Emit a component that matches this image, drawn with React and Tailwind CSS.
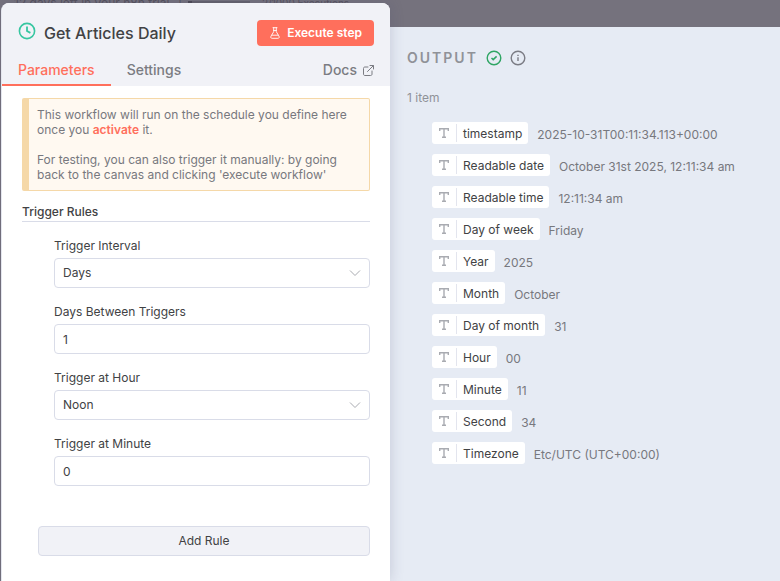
import { useState } from 'react';

const outputFields = [
  { name: 'timestamp', value: '2025-10-31T00:11:34.113+00:00' },
  { name: 'Readable date', value: 'October 31st 2025, 12:11:34 am' },
  { name: 'Readable time', value: '12:11:34 am' },
  { name: 'Day of week', value: 'Friday' },
  { name: 'Year', value: '2025' },
  { name: 'Month', value: 'October' },
  { name: 'Day of month', value: '31' },
  { name: 'Hour', value: '00' },
  { name: 'Minute', value: '11' },
  { name: 'Second', value: '34' },
  { name: 'Timezone', value: 'Etc/UTC (UTC+00:00)' },
];

function ClockIcon() {
  return (
    <svg className="mb-1 size-[18px] shrink-0" viewBox="0 0 18 18" fill="none" stroke="#36c6a0" strokeWidth="1.6">
      <circle cx="9" cy="9" r="7.6" />
      <path d="M9 4.6V9l3.4 1.9" strokeWidth="1.8" />
    </svg>
  );
}

function FlaskIcon() {
  return (
    <svg className="size-3 shrink-0" viewBox="0 0 12 12" fill="none" stroke="currentColor" strokeLinecap="round" strokeLinejoin="round">
      <path d="M4 .7h4M4.7.7v4L2.2 8.9c-.9 1.5-.3 2.4.9 2.4h5.8c1.2 0 1.8-.9.9-2.4L7.3 4.7v-4M4.7 3.5h2.6M3 8.2h6" strokeWidth=".9" />
    </svg>
  );
}

function ExternalIcon() {
  return (
    <svg className="size-[11px] shrink-0" viewBox="0 0 11 11" fill="none" stroke="currentColor" strokeLinecap="round" strokeLinejoin="round">
      <path d="M5 2H2C1 2 .5 2.5.5 3.5V9c0 1 .5 1.5 1.5 1.5h5.500c1 0 1.500-.5 1.500-1.500V6M7 .5h3.500V4M10.300.7L4.500 6.500" />
    </svg>
  );
}

function CheckIcon() {
  return (
    <svg className="size-4 shrink-0" viewBox="0 0 16 16" fill="none" stroke="#2fa564" strokeWidth="1.4">
      <circle cx="8" cy="8" r="6.8" />
      <path d="M5.5 8l1.7 1.6 3.4-3.2" strokeWidth="1.5" />
    </svg>
  );
}

function InfoIcon() {
  return (
    <svg className="size-4 shrink-0" viewBox="0 0 16 16" fill="none" stroke="#7b7c84" strokeWidth="1.4">
      <circle cx="8" cy="8" r="6.8" />
      <path d="M8 7.2v3.8M8 4.8v1.3" />
    </svg>
  );
}

function TextTypeIcon() {
  return (
    <svg className="size-3 shrink-0" viewBox="0 0 12 12" fill="none" stroke="#a9abb1" strokeWidth="1.4">
      <path d="M1.7 4V1.7h8.6V4M6 1.7v8.6M4 10.3h4" />
    </svg>
  );
}

const controlClass =
  'block h-[30px] w-full appearance-none rounded-[4px] border border-[#d9dce8] bg-white px-2 text-xs text-[#414244] outline-none focus:border-[#ff6d5a]';

function Field({ id, label, children }) {
  return (
    <div className="flex flex-col gap-[2px]">
      <label htmlFor={id} className="text-xs leading-5">{label}</label>
      {children}
    </div>
  );
}

function SelectField({ id, label, options }) {
  return (
    <Field id={id} label={label}>
      <div className="relative">
        <select id={id} className={controlClass}>
          {options.map((o) => (
            <option key={o}>{o}</option>
          ))}
        </select>
        <svg className="pointer-events-none absolute top-2 right-2 size-3.5" viewBox="0 0 14 14" fill="none" stroke="#a9abb1">
          <path d="M2 4.5l5 5 5-5" />
        </svg>
      </div>
    </Field>
  );
}

function NumberField({ id, label, initial }) {
  const [value, setValue] = useState(initial);

  return (
    <Field id={id} label={label}>
      <input id={id} type="text" value={value} onChange={(e) => setValue(e.target.value)} className={controlClass} />
    </Field>
  );
}

function ParametersPanel() {
  return (
    <section className="z-10 mt-[3px] ml-px flex flex-col overflow-hidden rounded-t-lg border-l border-[#e4e6ee] bg-white shadow-[0_0_14px_rgba(70,75,110,0.22)]">
      <header className="bg-[#f1f2f7]">
        <div className="flex h-[60px] items-center gap-2 px-4">
          <ClockIcon />
          <h1 className="flex-1 text-base leading-5 font-medium">Get Articles Daily</h1>
          <button type="button" className="flex h-[26px] items-center gap-[6px] rounded-[4px] bg-[#ff6f5c] px-3 text-xs font-semibold text-white">
            <FlaskIcon />
            Execute step
          </button>
        </div>
        <nav className="flex items-start text-sm leading-[14px] font-medium text-[#7b7c82]">
          <button type="button" className="border-b-2 border-[#ff6f5c] px-4 pb-[7px] text-[#ff6f5c]">Parameters</button>
          <button type="button" className="px-4">Settings</button>
          <a href="#docs" className="ml-auto flex items-center gap-[6px] pr-4">
            Docs
            <ExternalIcon />
          </a>
        </nav>
      </header>

      <div className="flex flex-col pt-3 pr-5 pb-6 pl-5">
        {/* Notice */}
        <div className="rounded-[2px] border border-l-[7px] border-[#f5d8a8] bg-[#fff9f1] p-2 text-xs leading-[15px] text-[#77787e]">
          <p>
            This workflow will run on the schedule you define here once you{' '}
            <a href="#activate" className="font-semibold text-[#ff6f5c]">activate</a> it.
          </p>
          <p className="mt-[15px]">
            For testing, you can also trigger it manually: by going back to the canvas and clicking 'execute workflow'
          </p>
        </div>

        {/* Rules */}
        <h2 className="mt-3 border-b border-[#d9dce8] text-xs leading-[18px] font-medium">Trigger Rules</h2>
        <div className="mt-[14px] flex flex-col gap-[14px] pl-8">
          <SelectField id="interval" label="Trigger Interval" options={['Days', 'Hours', 'Weeks', 'Months']} />
          <NumberField id="days" label="Days Between Triggers" initial="1" />
          <SelectField id="hour" label="Trigger at Hour" options={['Noon', 'Midnight']} />
          <NumberField id="minute" label="Trigger at Minute" initial="0" />
        </div>
        <button type="button" className="mt-10 ml-4 h-[30px] rounded-[4px] border border-[#d9dce8] bg-[#f1f2f7] text-xs">
          Add Rule
        </button>
      </div>
    </section>
  );
}

function OutputPanel() {
  return (
    <section className="mt-[27px] bg-[#e6ebf4] pt-[22px] pl-[17px]">
      <div className="flex h-[18px] items-center gap-2">
        <h2 className="text-sm font-semibold tracking-[2px] text-[#909298]">OUTPUT</h2>
        <CheckIcon />
        <InfoIcon />
      </div>
      <p className="mt-[22px] text-xs leading-[18px] text-[#909298]">1 item</p>

      <ul className="mt-[15px] flex flex-col gap-2 pl-[25px] text-xs">
        {outputFields.map((field) => (
          <li key={field.name} className="flex items-start gap-[9px]">
            <span className="flex h-[22px] items-center rounded-[3px] bg-white px-[6px]">
              <TextTypeIcon />
              <span className="ml-[6px] h-[18px] border-l border-[#e3e5ee] pl-[6px] leading-5">{field.name}</span>
            </span>
            <span className="pt-[2px] leading-[22px] text-[#77787e]">{field.value}</span>
          </li>
        ))}
      </ul>
    </section>
  );
}

function App() {
  return (
    <div className="relative grid min-h-screen grid-cols-2 bg-[#75727d] font-['Inter',sans-serif] text-[#414244]">
      {/* Dimmed top bar of the canvas, mostly hidden by the panel */}
      <div className="absolute inset-x-0 top-0 flex h-4 items-start leading-[6px] whitespace-nowrap text-[#55525d]">
        <span className="w-[164px] pl-[14px] text-xs leading-[6px]">12 days left in your n8n trial</span>
        <span className="w-6 pl-[14px] text-xs leading-[6px]">|</span>
        <span className="mt-px flex h-[2px] w-[62px] bg-[#65626d]">
          <span className="h-[2px] w-1 bg-[#4c4954]" />
        </span>
        <span className="pl-3 text-[10px] leading-[6px]">2/1000 Executions</span>
      </div>
      <ParametersPanel />
      <OutputPanel />
    </div>
  );
}

export default App;
